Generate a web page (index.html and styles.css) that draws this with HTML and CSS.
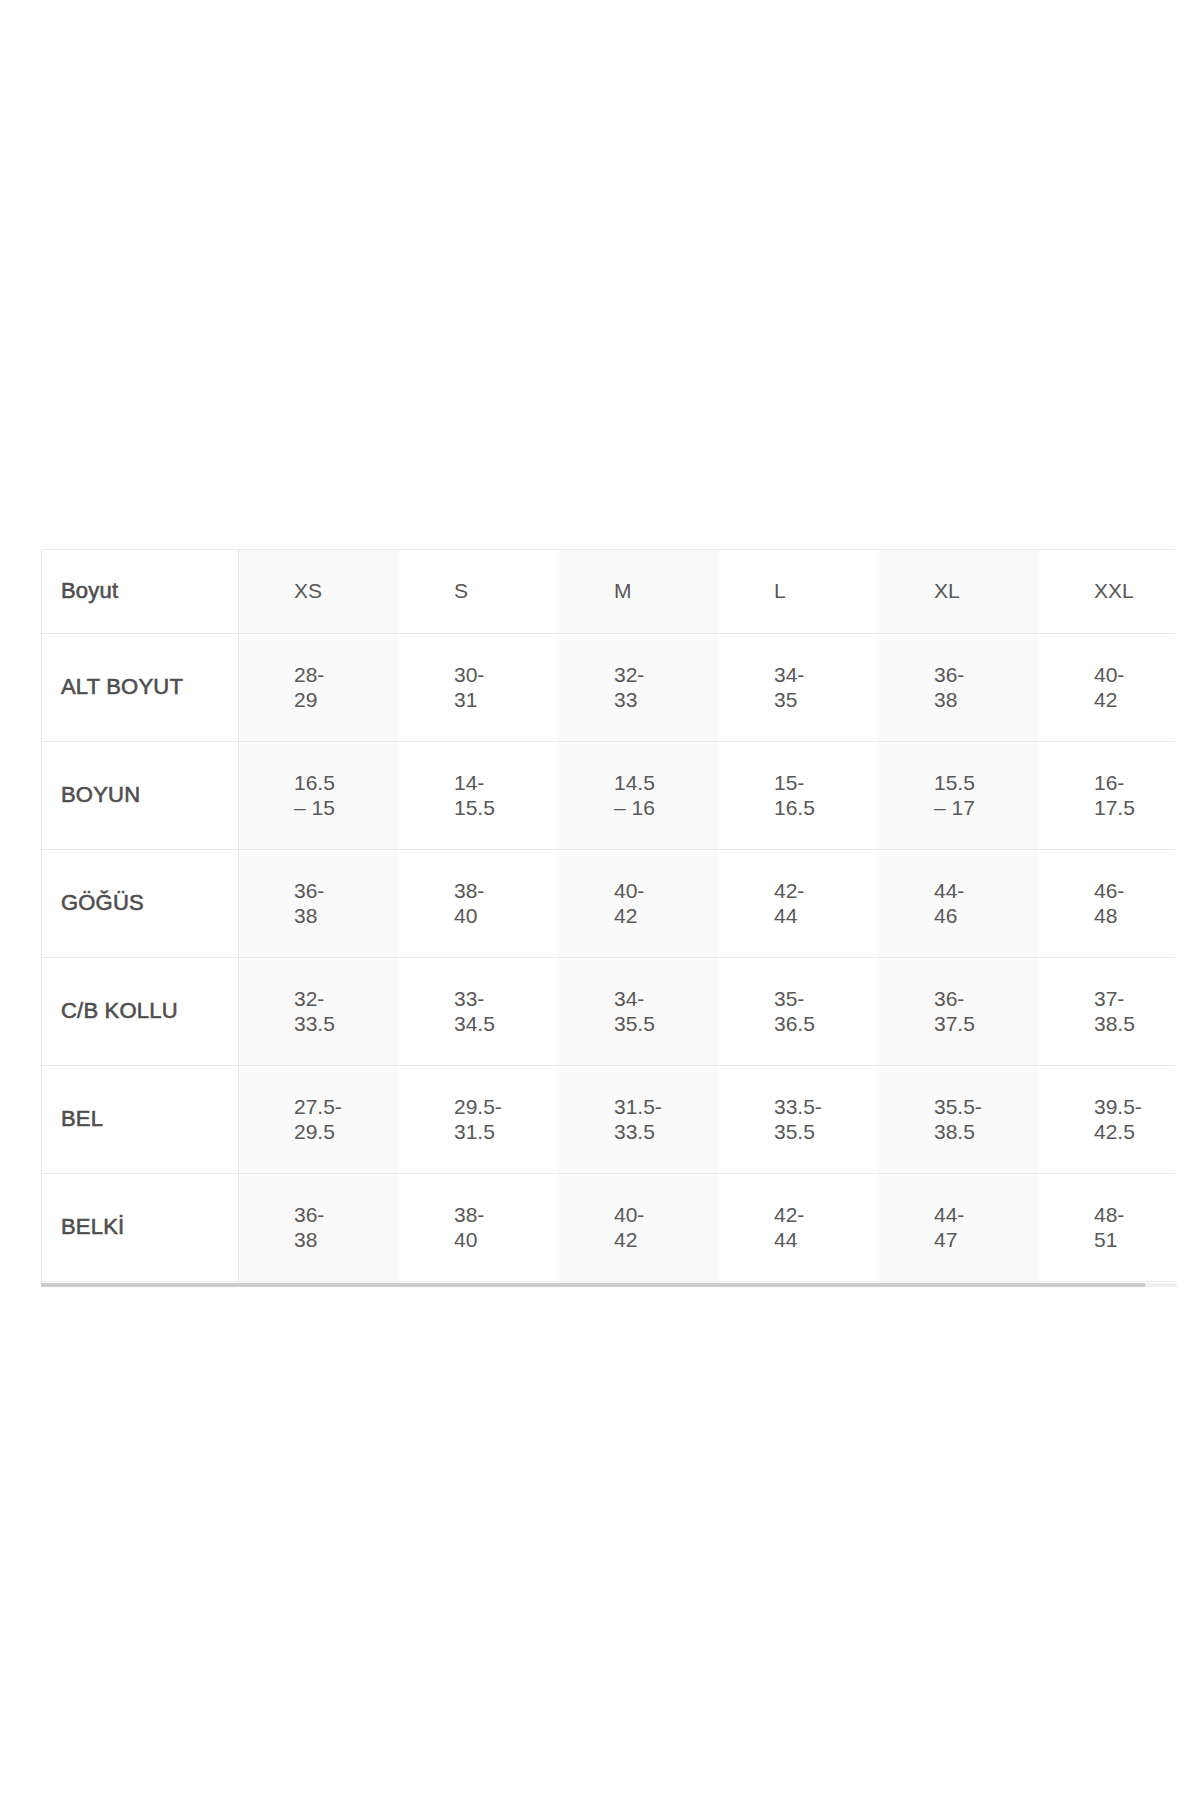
FILE: index.html
```html
<!DOCTYPE html>
<html lang="tr">
<head>
<meta charset="utf-8">
<title>Beden Tablosu</title>
<link rel="stylesheet" href="styles.css">
</head>
<body>
<div class="wrap">
  <div class="scroller">
    <div class="grid">
      <div class="c lbl">Boyut</div><div class="c v sh">XS</div><div class="c v">S</div><div class="c v sh">M</div><div class="c v">L</div><div class="c v sh">XL</div><div class="c v">XXL</div>

      <div class="c lbl row">ALT BOYUT</div><div class="c v sh">28-<br>29</div><div class="c v">30-<br>31</div><div class="c v sh">32-<br>33</div><div class="c v">34-<br>35</div><div class="c v sh">36-<br>38</div><div class="c v">40-<br>42</div>

      <div class="c lbl row">BOYUN</div><div class="c v sh">16.5<br>– 15</div><div class="c v">14-<br>15.5</div><div class="c v sh">14.5<br>– 16</div><div class="c v">15-<br>16.5</div><div class="c v sh">15.5<br>– 17</div><div class="c v">16-<br>17.5</div>

      <div class="c lbl row">GÖĞÜS</div><div class="c v sh">36-<br>38</div><div class="c v">38-<br>40</div><div class="c v sh">40-<br>42</div><div class="c v">42-<br>44</div><div class="c v sh">44-<br>46</div><div class="c v">46-<br>48</div>

      <div class="c lbl row">C/B KOLLU</div><div class="c v sh">32-<br>33.5</div><div class="c v">33-<br>34.5</div><div class="c v sh">34-<br>35.5</div><div class="c v">35-<br>36.5</div><div class="c v sh">36-<br>37.5</div><div class="c v">37-<br>38.5</div>

      <div class="c lbl row">BEL</div><div class="c v sh">27.5-<br>29.5</div><div class="c v">29.5-<br>31.5</div><div class="c v sh">31.5-<br>33.5</div><div class="c v">33.5-<br>35.5</div><div class="c v sh">35.5-<br>38.5</div><div class="c v">39.5-<br>42.5</div>

      <div class="c lbl row">BELKİ</div><div class="c v sh">36-<br>38</div><div class="c v">38-<br>40</div><div class="c v sh">40-<br>42</div><div class="c v">42-<br>44</div><div class="c v sh">44-<br>47</div><div class="c v">48-<br>51</div>
    </div>
  </div>
  <div class="track"><div class="thumb"></div></div>
</div>
</body>
</html>
```

FILE: styles.css
```css
html, body {
  margin: 0;
  padding: 0;
  background: #ffffff;
}

body {
  font-family: "Liberation Sans", Arial, sans-serif;
  color: #555555;
}

.wrap {
  margin: 549px 0 0 41px;
  width: 1134px;
}

.scroller {
  width: 1134px;
  overflow: hidden;
  border-top: 1px solid #e9e9e9;
  border-left: 1px solid #e9e9e9;
  box-sizing: border-box;
}

.grid {
  display: grid;
  grid-template-columns: 197px repeat(6, 160px);
  grid-template-rows: 84px repeat(6, 108px);
  width: 1157px;
}

.c {
  box-sizing: border-box;
  border-bottom: 1px solid #e9e9e9;
  display: flex;
  align-items: center;
  font-size: 21px;
  line-height: 25px;
  padding-bottom: 2px;
}

.lbl {
  padding-left: 19px;
  border-right: 1px solid #e9e9e9;
  font-size: 22px;
  letter-spacing: 0.2px;
  font-weight: normal;
  color: #4f4f4f;
  -webkit-text-stroke: 0.6px #4f4f4f;
}

.v {
  padding-left: 55px;
  color: #585858;
}

.sh {
  background: #fafafa;
}

.track {
  height: 4px;
  margin-top: 1px;
  background: #f0f0f0;
  width: 1136px;
}

.thumb {
  height: 4px;
  width: 1104px;
  background: #cbcbcb;
}
```
